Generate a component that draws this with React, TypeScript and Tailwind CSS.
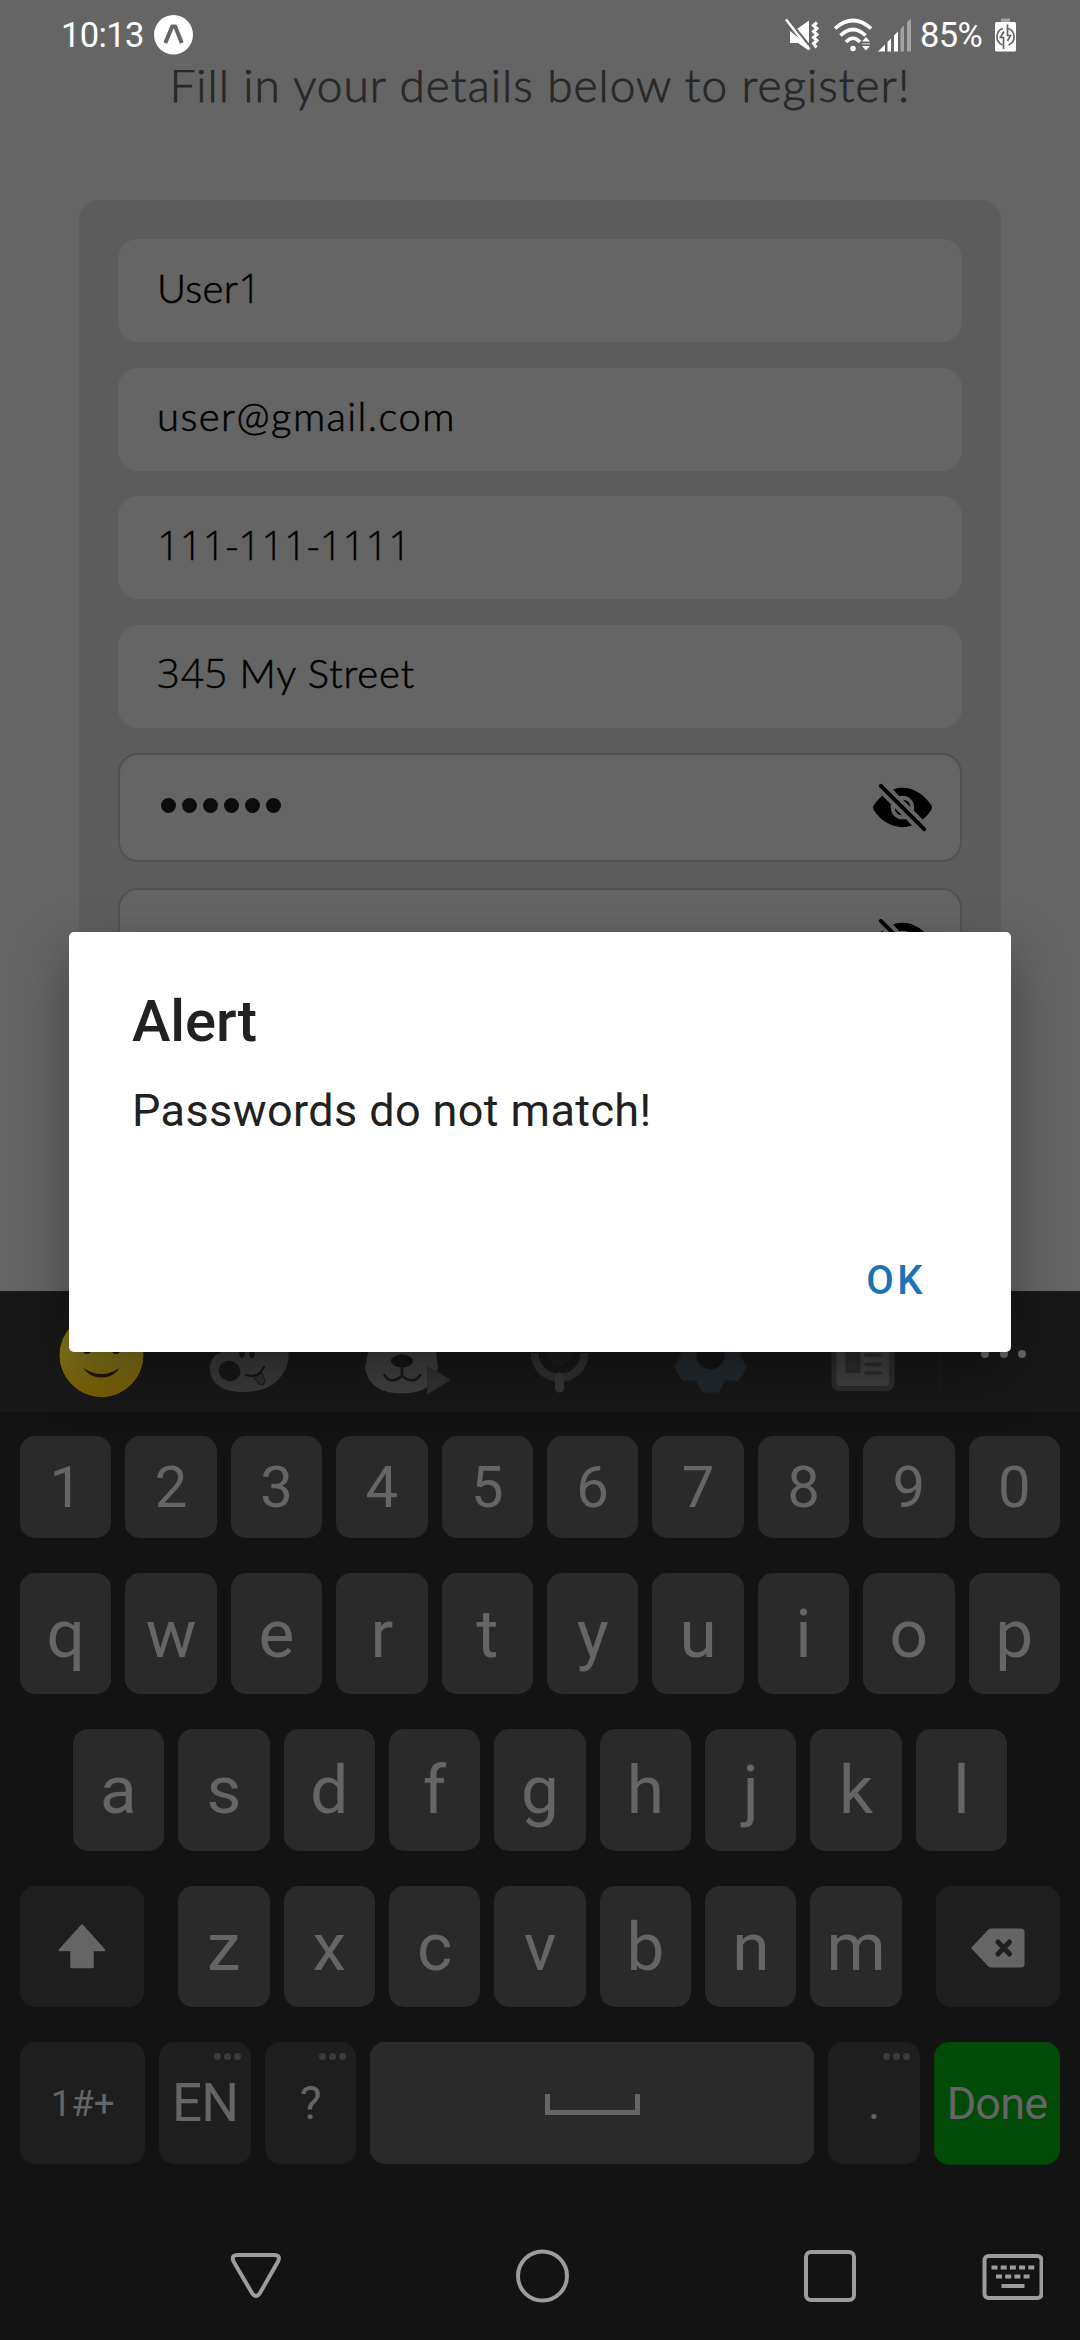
import React from 'react';
import { IoEyeOff } from 'react-icons/io5';

const latin = "font-['Lato',sans-serif]";

function StatusBar() {
  return (
    <header className="flex h-[70px] shrink-0 items-center pl-[61px] pr-[64px] text-[34.5px] leading-[70px] text-white">
      <span className="w-[93px] tracking-[-0.6px]">10:13</span>
      <svg width="39" height="40" viewBox="0 0 39 40">
        <ellipse cx="19.5" cy="19.8" rx="19.5" ry="19.7" fill="#fff" />
        <path d="M11.3 28 L18.2 11.5 H21.2 L27.8 28" fill="none" stroke="#656565" strokeWidth="4" strokeLinejoin="round" />
      </svg>
      <div className="ml-auto flex items-center">
        <svg className="mr-[15px]" width="34" height="34" viewBox="0 0 34 34">
          <path d="M5 13 V25 H13 L23 32 L24 28 Z M12 11 L24 2.5 V25.5 Z" fill="#fff" />
          <path d="M1 1.5 L24.5 31.5" stroke="#fff" strokeWidth="2.6" />
          <path d="M5.5 3.5 L25.5 28.5" stroke="#656565" strokeWidth="1.4" />
          <path d="M32 4.5 L28.5 7.5 L32 10.5 L28.5 13.5 L32 16.5 L28.5 19.5 L32 22.5 L28.5 25.5 L31.5 29.5" fill="none" stroke="#fff" strokeWidth="3" />
        </svg>
        <svg className="mr-[6px]" width="38" height="34" viewBox="0 0 38 34">
          <g fill="none" stroke="#fff" strokeWidth="3.6">
            <path d="M1 10.5 Q19 -5.5 37 10.5" />
            <path d="M6.5 17.5 Q19 5.5 31.5 17.5" />
            <path d="M12 24 Q19 16.5 26 24" />
          </g>
          <circle cx="19" cy="30.5" r="2.8" fill="#fff" />
          <path d="M28 23.5 L32 19 L36 23.5 Z M28 28 L32 32.5 L36 28 Z" fill="#fff" />
          <path d="M28 25.8 H36" stroke="#b5b5b5" strokeWidth="1.5" />
        </svg>
        <svg className="mr-[9px]" width="33" height="34" viewBox="0 0 33 34">
          <path d="M0 33.5 L7 26.5 V33.5 Z M9.5 24 L13 20.5 V33.5 H9.5 Z M16 17.5 L20 13.5 V33.5 H16 Z" fill="#fff" />
          <path d="M22.5 11 L26 7.5 V33.5 H22.5 Z M29 4 L33 0.5 V33.5 H29 Z" fill="#a3a3a3" />
        </svg>
        <span className="mr-[12px] w-[63px] tracking-[-0.6px]">85%</span>
        <svg width="21" height="34" viewBox="0 0 21 34">
          <rect x="6" y="0.5" width="9" height="4" fill="#a3a3a3" />
          <rect y="4" width="21" height="29.5" rx="1.5" fill="#fff" />
          <g fill="none" stroke="#656565" strokeWidth="1.7">
            <path d="M8 10.5 C0 13 0 24 7.5 27" />
            <path d="M13 10.5 C21 13 21 24 13.5 27" />
            <path d="M12.5 6.5 V17.5 H15.5 L12.5 23 M8.5 31 V19.5 H5.5 L9 13.5" />
          </g>
        </svg>
      </div>
    </header>
  );
}

/* Digits use Open Sans, whose "1" has no foot. */
function TextField({ value, className }: { value: string; className: string }) {
  return (
    <div className={`flex h-[103px] shrink-0 items-center rounded-[20px] bg-[#656565] pb-[6px] pl-[39px] font-light text-black [-webkit-text-stroke:0.6px_#000] ${latin}`}>
      <span className={`whitespace-pre leading-[48px] ${className}`}>
        {value.split(/([\d-]+)/).map((part, i) =>
          i % 2 ? (
            <span key={i} className="font-['Open_Sans',sans-serif] [-webkit-text-stroke:0.3px_#000]">
              {part}
            </span>
          ) : (
            part
          ),
        )}
      </span>
    </div>
  );
}

function PasswordField({ length }: { length: number }) {
  return (
    <div className="flex h-[109px] shrink-0 items-center justify-between rounded-[20px] border-[2.6px] border-[#525252] bg-[#656565] pl-[41px] pr-[26px]">
      <div className="flex gap-[6px] pb-[4px]">
        {Array.from({ length }, (_, i) => (
          <span key={i} className="size-[15px] rounded-full bg-[#0c0c0c]" />
        ))}
      </div>
      <IoEyeOff size={63} color="#000" />
    </div>
  );
}

function SignUpScreen() {
  return (
    <main className="flex h-[1221px] shrink-0 flex-col overflow-hidden">
      <h1 className={`mt-[-17px] h-[64px] shrink-0 whitespace-nowrap text-center text-[46px] font-light leading-[64px] tracking-[1px] text-[#282828] [-webkit-text-stroke:0.8px_#282828] ${latin}`}>
        Fill in your details below to register!
      </h1>
      <section className="mx-[79px] mt-[83px] flex h-[1100px] shrink-0 flex-col gap-[25.6px] rounded-[20px] bg-[#5d5d5d] px-[39px] pt-[39px]">
        <TextField value="User1" className="text-[40px] tracking-[0.3px]" />
        <TextField value="user@gmail.com" className="text-[40px] tracking-[1.4px]" />
        <TextField value="111-111-1111" className="text-[40px] tracking-[0px]" />
        <TextField value="345 My Street" className="text-[40px] tracking-[0.8px]" />
        <PasswordField length={6} />
        <PasswordField length={6} />
      </section>
    </main>
  );
}

function Toolbar() {
  return (
    <div className="flex h-[121px] shrink-0 bg-[#181818] pl-[26px]">
      <div className="grid w-[913px] grid-cols-6 brightness-125">
        <svg width="152" height="121" viewBox="0 0 152 121">
          <defs>
            <linearGradient id="smile" x1="0" y1="0" x2="0" y2="1">
              <stop offset="0" stopColor="#66611f" />
              <stop offset="0.55" stopColor="#665b14" />
              <stop offset="1" stopColor="#604800" />
            </linearGradient>
          </defs>
          <circle cx="75.5" cy="64" r="41.5" fill="url(#smile)" stroke="#6b5a00" strokeWidth="1" />
          <path d="M57.5 77 Q75.5 89 93.500 77 Q88 86.500 75.500 86.500 Q63 86.500 57.500 77 Z" fill="#1c1200" />
          <circle cx="61" cy="58.500" r="4.500" fill="#1c1200" />
          <circle cx="90" cy="58.500" r="4.500" fill="#1c1200" />
        </svg>
        <svg width="152" height="121" viewBox="0 0 152 121">
          <path d="M32 78 C32 65 40 61 52 59 L54 36 H104 L109 56 C112 64 111 74 104 84 C95 97 82 101 65 101 C44 101 32 92 32 78 Z" fill="#2e2e2e" />
          <ellipse cx="51.5" cy="80" rx="11" ry="10" transform="rotate(20 51.5 80)" fill="#131313" />
          <ellipse cx="64" cy="62" rx="2.8" ry="5" fill="#111" />
          <ellipse cx="74" cy="62" rx="2.8" ry="5" fill="#111" />
          <path d="M76 86 Q84 99 87 90 L84 82 Z" fill="#262626" stroke="#1b1b1b" strokeWidth="1.5" />
          <path d="M68 84 Q80 88 86 76" fill="none" stroke="#111" strokeWidth="2" strokeLinecap="round" />
        </svg>
        <svg width="152" height="121" viewBox="0 0 152 121">
          <path d="M38 62 Q38 28 72 28 Q106 28 106 62 L108 76 Q106 102 72 102.5 Q38 102 35 76 Z" fill="#323232" />
          <ellipse cx="72" cy="70" rx="11" ry="6.5" fill="#111" />
          <path d="M72 75 V84 M54.5 84 Q60 94 72 85 Q84 94 90 84" fill="none" stroke="#141414" strokeWidth="2.5" strokeLinecap="round" />
          <path d="M98 76 L119 89 L98 102 Z" fill="#2a2a2a" stroke="#272727" strokeWidth="2" strokeLinejoin="round" />
        </svg>
        <svg width="152" height="121" viewBox="0 0 152 121">
          <path d="M51.5 62 A25 25 0 0 0 101.5 62" fill="none" stroke="#262626" strokeWidth="8" />
          <rect x="64" y="20" width="25" height="54" rx="12.5" fill="#181818" />
          <path d="M76.5 86 V97" stroke="#2b2b2b" strokeWidth="9" strokeLinecap="round" />
        </svg>
        <svg width="152" height="121" viewBox="0 0 152 121">
          <g transform="translate(75.5 64)" fill="#1c2125" stroke="#1c2125" strokeWidth="4" strokeLinejoin="round">
            {[30, 90, 150, 210, 270, 330].map((a) => (
              <path key={a} d="M24 -13 L35.500 -7 V7 L24 13 Z" transform={`rotate(${a})`} />
            ))}
          </g>
          <circle cx="75.5" cy="64" r="21" fill="none" stroke="#1c2125" strokeWidth="14" />
          <circle cx="75.5" cy="64" r="14" fill="#111" />
        </svg>
        <svg width="152" height="121" viewBox="0 0 152 121">
          <rect x="44.5" y="32" width="63" height="68" rx="8" fill="#242424" />
          <rect x="49.5" y="36" width="52.5" height="59" rx="4" fill="#333" />
          <rect x="58.5" y="58" width="15" height="24" fill="#242424" />
          <path d="M79 64 H93 M79 73.5 H93 M79 82 H93" stroke="#242424" strokeWidth="3.6" strokeLinecap="round" />
        </svg>
      </div>
      <div className="my-[21px] flex grow items-center gap-[10.5px] border-l border-[#222] pl-[41px] pt-[5px]">
        <span className="size-[8px] rounded-full bg-[#686868]" />
        <span className="size-[8px] rounded-full bg-[#686868]" />
        <span className="size-[8px] rounded-full bg-[#686868]" />
      </div>
    </div>
  );
}

const keyBase = 'flex items-center justify-center rounded-[15px] text-[#656565]';

function LetterKeys({ keys }: { keys: string }) {
  return (
    <>
      {keys.split('').map((k) => (
        <div key={k} className={`${keyBase} h-full w-[91.4px] shrink-0 bg-[#2a2a2a]`}>
          {k}
        </div>
      ))}
    </>
  );
}

function MoreDots() {
  return (
    <div className="absolute right-[10px] top-[11px] flex gap-[3px]">
      <span className="size-[7px] rounded-full bg-[#3c3c3c]" />
      <span className="size-[7px] rounded-full bg-[#3c3c3c]" />
      <span className="size-[7px] rounded-full bg-[#3c3c3c]" />
    </div>
  );
}

function Keyboard() {
  return (
    <div className="flex h-[788px] shrink-0 flex-col gap-[35px] px-[20px] pt-[24px] text-[67.5px] leading-none">
      <div className="flex h-[101.5px] shrink-0 justify-between text-[58px]">
        <LetterKeys keys="1234567890" />
      </div>
      <div className="flex h-[121.5px] shrink-0 justify-between">
        <LetterKeys keys="qwertyuiop" />
      </div>
      <div className="flex h-[121.5px] shrink-0 justify-center gap-[14px]">
        <LetterKeys keys="asdfghjkl" />
      </div>
      <div className="flex h-[121.5px] shrink-0 justify-between">
        <div className={`${keyBase} w-[124px] bg-[#1e1e1e]`}>
          <svg width="50" height="46" viewBox="0 0 50 46">
            <path d="M25 2.5 L47 27 H35.5 V44 H14.5 V27 H3 Z" fill="#656565" stroke="#656565" strokeWidth="2.5" strokeLinejoin="round" />
          </svg>
        </div>
        <div className="flex gap-[14px]">
          <LetterKeys keys="zxcvbnm" />
        </div>
        <div className={`${keyBase} w-[124px] bg-[#1e1e1e] pt-[3px]`}>
          <svg width="54" height="40" viewBox="0 0 54 40">
            <path d="M19 2 H50 Q52 2 52 4 V36 Q52 38 50 38 H19 L2 20 Z" fill="#656565" stroke="#656565" strokeWidth="3" strokeLinejoin="round" />
            <path d="M27 14 L38.5 26 M38.5 14 L27 26" stroke="#1e1e1e" strokeWidth="5" strokeLinecap="round" />
          </svg>
        </div>
      </div>
      <div className="flex h-[121.5px] shrink-0 gap-[14px]">
        <div className={`${keyBase} w-[125px] bg-[#1e1e1e] pt-[3px] text-[36.5px]`}>1#+</div>
        <div className={`${keyBase} relative w-[92px] bg-[#1e1e1e] pt-[2px] text-[53px] tracking-[-1px]`}>
          EN
          <MoreDots />
        </div>
        <div className={`${keyBase} relative w-[91px] bg-[#1e1e1e] pt-[1px] text-[46px]`}>
          ?
          <MoreDots />
        </div>
        <div className={`${keyBase} grow bg-[#2a2a2a] pt-[3px]`}>
          <div className="h-[21px] w-[95px] border-x-[5px] border-b-[5px] border-[#656565]" />
        </div>
        <div className={`${keyBase} relative w-[92px] bg-[#1e1e1e] pt-[1px] text-[46px]`}>
          .
          <MoreDots />
        </div>
        <div className={`${keyBase} w-[126px] bg-[#024a08] pt-[2px] text-[45px] tracking-[-0.8px] shadow-[0_1px_0_#033a08]`}>Done</div>
      </div>
    </div>
  );
}

function NavigationBar() {
  return (
    <nav className="flex grow items-start pl-[229px] pt-[49px]">
      <svg width="54" height="54" viewBox="0 0 54 54">
        <path d="M8.5 6 H45 Q52 6 49 12.5 L31 44 Q27 50 23 44 L4.5 12.5 Q2 6 8.5 6 Z" fill="none" stroke="#9c9c9c" strokeWidth="4" />
      </svg>
      <svg className="ml-[232px]" width="54" height="54" viewBox="0 0 54 54">
        <circle cx="27.5" cy="27" r="24.5" fill="none" stroke="#9c9c9c" strokeWidth="4" />
      </svg>
      <svg className="ml-[234px]" width="54" height="54" viewBox="0 0 54 54">
        <rect x="3" y="3" width="48" height="48" rx="5" fill="none" stroke="#9c9c9c" strokeWidth="4" />
      </svg>
      <svg className="ml-[124px]" width="62" height="54" viewBox="0 0 62 54">
        <rect x="3.5" y="7" width="57" height="42" rx="4" fill="none" stroke="#9c9c9c" strokeWidth="4" />
        <path d="M10.500 18.5 H54" stroke="#9c9c9c" strokeWidth="4" strokeDasharray="6 3.2" />
        <path d="M15 27.5 H49.500" stroke="#9c9c9c" strokeWidth="4" strokeDasharray="6 3.2" />
        <path d="M20.500 37 H43.500" stroke="#9c9c9c" strokeWidth="4" />
      </svg>
    </nav>
  );
}

function AlertDialog() {
  return (
    <div
      role="alertdialog"
      className="absolute left-[69px] top-[932px] flex h-[420px] w-[942px] flex-col rounded-[5px] bg-white px-[63px] text-[#212121] shadow-[0_20px_56px_-4px_rgba(0,0,0,0.4)]"
    >
      <h2 className="mt-[53px] h-[72px] text-[58px] font-medium leading-[72px] tracking-[-0.1px]">Alert</h2>
      <p className="mt-[26px] h-[56px] whitespace-nowrap text-[45px] leading-[56px] tracking-[0.4px]">Passwords do not match!</p>
      <button className="ml-auto mr-[22px] mt-[114px] h-[56px] text-[40px] font-medium leading-[56px] tracking-[3.5px] text-[#1a73b7]">OK</button>
    </div>
  );
}

export default function App() {
  return (
    <div className="relative flex h-[2340px] w-[1080px] flex-col overflow-hidden bg-[#656565] font-['Roboto',sans-serif]">
      <StatusBar />
      <SignUpScreen />
      <div className="flex grow flex-col bg-[#131313]">
        <Toolbar />
        <Keyboard />
        <NavigationBar />
      </div>
      <AlertDialog />
    </div>
  );
}
